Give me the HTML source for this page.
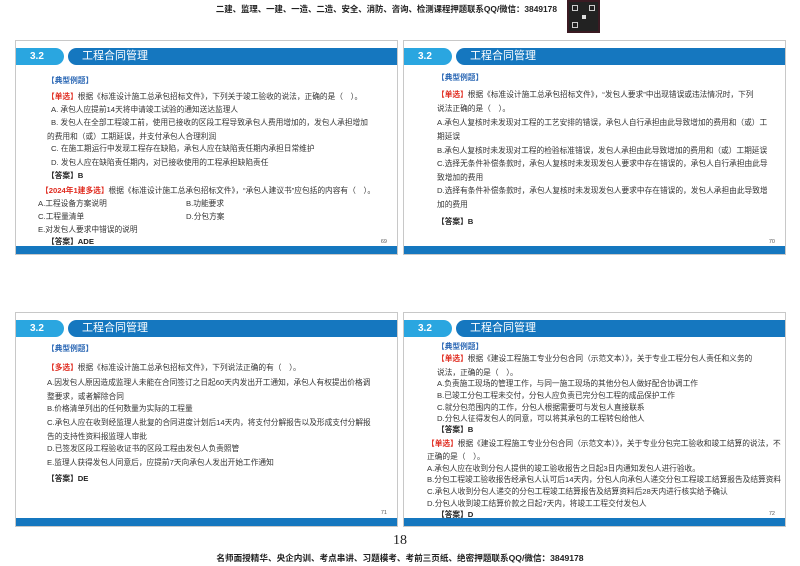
<!DOCTYPE html>
<html><head><meta charset="utf-8"><style>
*{margin:0;padding:0;box-sizing:border-box}
body{width:800px;height:566px;background:#fff;position:relative;overflow:hidden;font-family:"Liberation Sans","Noto Sans CJK SC",sans-serif;color:#333}
.s{position:absolute;border:1px solid #c8c8c8;background:#fff;width:383px;height:215px}
.pill{position:absolute;left:0;top:7px;width:48px;height:17px;background:#2aa6e0;border-radius:0 9px 9px 0;color:#fff;font-weight:bold;font-size:10px;line-height:17px;padding-left:14px}
.tab{position:absolute;left:52px;right:0;top:7px;height:17px;background:#1577bf;border-radius:9px 0 0 9px;color:#fff;font-size:11px;line-height:17px;padding-left:14px}
.bar{position:absolute;left:0;right:0;bottom:0;height:8px;background:#1577bf}
.l{position:absolute;font-size:7.7px;white-space:nowrap;line-height:9px;color:#333}
.t{color:#2c68b5;font-weight:bold}
.r{color:#e02c20;font-weight:bold}
.b{font-weight:bold;color:#222}
.pn{position:absolute;font-size:5.5px;color:#555;right:10px}
.top{position:absolute;top:3px;right:243px;text-align:right;font-size:8.4px;font-weight:bold;color:#222;white-space:nowrap}
</style></head><body>
<div class="top">二建、监理、一建、一造、二造、安全、消防、咨询、检测课程押题联系QQ/微信：3849178</div>
<div style="position:absolute;left:567px;top:0;width:33px;height:33px;background:#222;border:2px solid #3a1a22"><div style="position:absolute;left:3px;top:3px;width:6px;height:6px;border:1px solid #ccc"></div><div style="position:absolute;right:3px;top:3px;width:6px;height:6px;border:1px solid #ccc"></div><div style="position:absolute;left:3px;bottom:3px;width:6px;height:6px;border:1px solid #ccc"></div><div style="position:absolute;left:13px;top:13px;width:4px;height:4px;background:#ddd"></div></div>

<!-- slide 1 -->
<div class="s" style="left:15px;top:40px">
<div class="pill">3.2</div><div class="tab">工程合同管理</div>
<div class="l t" style="left:31px;top:35px">【典型例题】</div>
<div class="l" style="left:31px;top:51px"><span class="r">【单选】</span>根据《标准设计施工总承包招标文件》，下列关于竣工验收的说法，正确的是（　）。</div>
<div class="l" style="left:35px;top:64px">A. 承包人应提前14天将申请竣工试验的通知送达监理人</div>
<div class="l" style="left:35px;top:77px">B. 发包人在全部工程竣工前，使用已接收的区段工程导致承包人费用增加的，发包人承担增加</div>
<div class="l" style="left:31px;top:91px">的费用和（或）工期延误，并支付承包人合理利润</div>
<div class="l" style="left:35px;top:103px">C. 在施工期运行中发现工程存在缺陷，承包人应在缺陷责任期内承担日常维护</div>
<div class="l" style="left:35px;top:117px">D. 发包人应在缺陷责任期内，对已接收使用的工程承担缺陷责任</div>
<div class="l b" style="left:31px;top:130px">【答案】B</div>
<div class="l" style="left:25px;top:145px"><span class="r">【2024年1建多选】</span>根据《标准设计施工总承包招标文件》，“承包人建议书”应包括的内容有（　）。</div>
<div class="l" style="left:22px;top:158px">A.工程设备方案说明</div><div class="l" style="left:170px;top:158px">B.功能要求</div>
<div class="l" style="left:22px;top:171px">C.工程量清单</div><div class="l" style="left:170px;top:171px">D.分包方案</div>
<div class="l" style="left:22px;top:184px">E.对发包人要求中错误的说明</div>
<div class="l b" style="left:31px;top:196px">【答案】ADE</div>
<div class="pn" style="top:198px">69</div>
<div class="bar"></div></div>

<!-- slide 2 -->
<div class="s" style="left:403px;top:40px">
<div class="pill">3.2</div><div class="tab">工程合同管理</div>
<div class="l t" style="left:33px;top:32px">【典型例题】</div>
<div class="l" style="left:33px;top:49px"><span class="r">【单选】</span>根据《标准设计施工总承包招标文件》，“发包人要求”中出现错误或违法情况时，下列</div>
<div class="l" style="left:33px;top:63px">说法正确的是（　）。</div>
<div class="l" style="left:33px;top:77px">A.承包人复核时未发现对工程的工艺安排的错误，承包人自行承担由此导致增加的费用和（或）工</div>
<div class="l" style="left:33px;top:91px">期延误</div>
<div class="l" style="left:33px;top:105px">B.承包人复核时未发现对工程的检验标准错误，发包人承担由此导致增加的费用和（或）工期延误</div>
<div class="l" style="left:33px;top:118px">C.选择无条件补偿条款时，承包人复核时未发现发包人要求中存在错误的，承包人自行承担由此导</div>
<div class="l" style="left:33px;top:132px">致增加的费用</div>
<div class="l" style="left:33px;top:145px">D.选择有条件补偿条款时，承包人复核时未发现发包人要求中存在错误的，发包人承担由此导致增</div>
<div class="l" style="left:33px;top:159px">加的费用</div>
<div class="l b" style="left:33px;top:176px">【答案】B</div>
<div class="pn" style="top:198px">70</div>
<div class="bar"></div></div>

<!-- slide 3 -->
<div class="s" style="left:15px;top:312px">
<div class="pill">3.2</div><div class="tab">工程合同管理</div>
<div class="l t" style="left:31px;top:31px">【典型例题】</div>
<div class="l" style="left:31px;top:50px"><span class="r">【多选】</span>根据《标准设计施工总承包招标文件》，下列说法正确的有（　）。</div>
<div class="l" style="left:31px;top:65px">A.因发包人原因造成监理人未能在合同签订之日起60天内发出开工通知，承包人有权提出价格调</div>
<div class="l" style="left:31px;top:79px">整要求，或者解除合同</div>
<div class="l" style="left:31px;top:91px">B.价格清单列出的任何数量为实际的工程量</div>
<div class="l" style="left:31px;top:105px">C.承包人应在收到经监理人批复的合同进度计划后14天内，将支付分解报告以及形成支付分解报</div>
<div class="l" style="left:31px;top:119px">告的支持性资料报监理人审批</div>
<div class="l" style="left:31px;top:131px">D.已签发区段工程验收证书的区段工程由发包人负责照管</div>
<div class="l" style="left:31px;top:145px">E.监理人获得发包人同意后，应提前7天向承包人发出开始工作通知</div>
<div class="l b" style="left:31px;top:161px">【答案】DE</div>
<div class="pn" style="top:197px">71</div>
<div class="bar"></div></div>

<!-- slide 4 -->
<div class="s" style="left:403px;top:312px">
<div class="pill">3.2</div><div class="tab">工程合同管理</div>
<div class="l t" style="left:33px;top:29px">【典型例题】</div>
<div class="l" style="left:33px;top:41px"><span class="r">【单选】</span>根据《建设工程施工专业分包合同（示范文本）》，关于专业工程分包人责任和义务的</div>
<div class="l" style="left:33px;top:55px">说法，正确的是（　）。</div>
<div class="l" style="left:33px;top:66px">A.负责施工现场的管理工作，与同一施工现场的其他分包人做好配合协调工作</div>
<div class="l" style="left:33px;top:78px">B.已竣工分包工程未交付，分包人应负责已完分包工程的成品保护工作</div>
<div class="l" style="left:33px;top:90px">C.就分包范围内的工作，分包人根据需要可与发包人直接联系</div>
<div class="l" style="left:33px;top:101px">D.分包人征得发包人的同意，可以将其承包的工程转包给他人</div>
<div class="l b" style="left:33px;top:112px">【答案】B</div>
<div class="l" style="left:23px;top:126px"><span class="r">【单选】</span>根据《建设工程施工专业分包合同（示范文本）》，关于专业分包完工验收和竣工结算的说法，不</div>
<div class="l" style="left:23px;top:139px">正确的是（　）。</div>
<div class="l" style="left:23px;top:151px">A.承包人应在收到分包人提供的竣工验收报告之日起3日内通知发包人进行验收。</div>
<div class="l" style="left:23px;top:162px">B.分包工程竣工验收报告经承包人认可后14天内，分包人向承包人递交分包工程竣工结算报告及结算资料</div>
<div class="l" style="left:23px;top:174px">C.承包人收到分包人递交的分包工程竣工结算报告及结算资料后28天内进行核实给予确认</div>
<div class="l" style="left:23px;top:186px">D.分包人收到竣工结算价款之日起7天内，将竣工工程交付发包人</div>
<div class="l b" style="left:33px;top:197px">【答案】D</div>
<div class="pn" style="top:198px">72</div>
<div class="bar"></div></div>

<div style="position:absolute;left:0;width:800px;top:533px;text-align:center;font-family:'Liberation Serif',serif;font-size:14px;color:#222">18</div>
<div style="position:absolute;left:0;width:800px;top:552px;text-align:center;font-size:8.6px;font-weight:bold;color:#222">名师面授精华、央企内训、考点串讲、习题模考、考前三页纸、绝密押题联系QQ/微信：3849178</div>
</body></html>
